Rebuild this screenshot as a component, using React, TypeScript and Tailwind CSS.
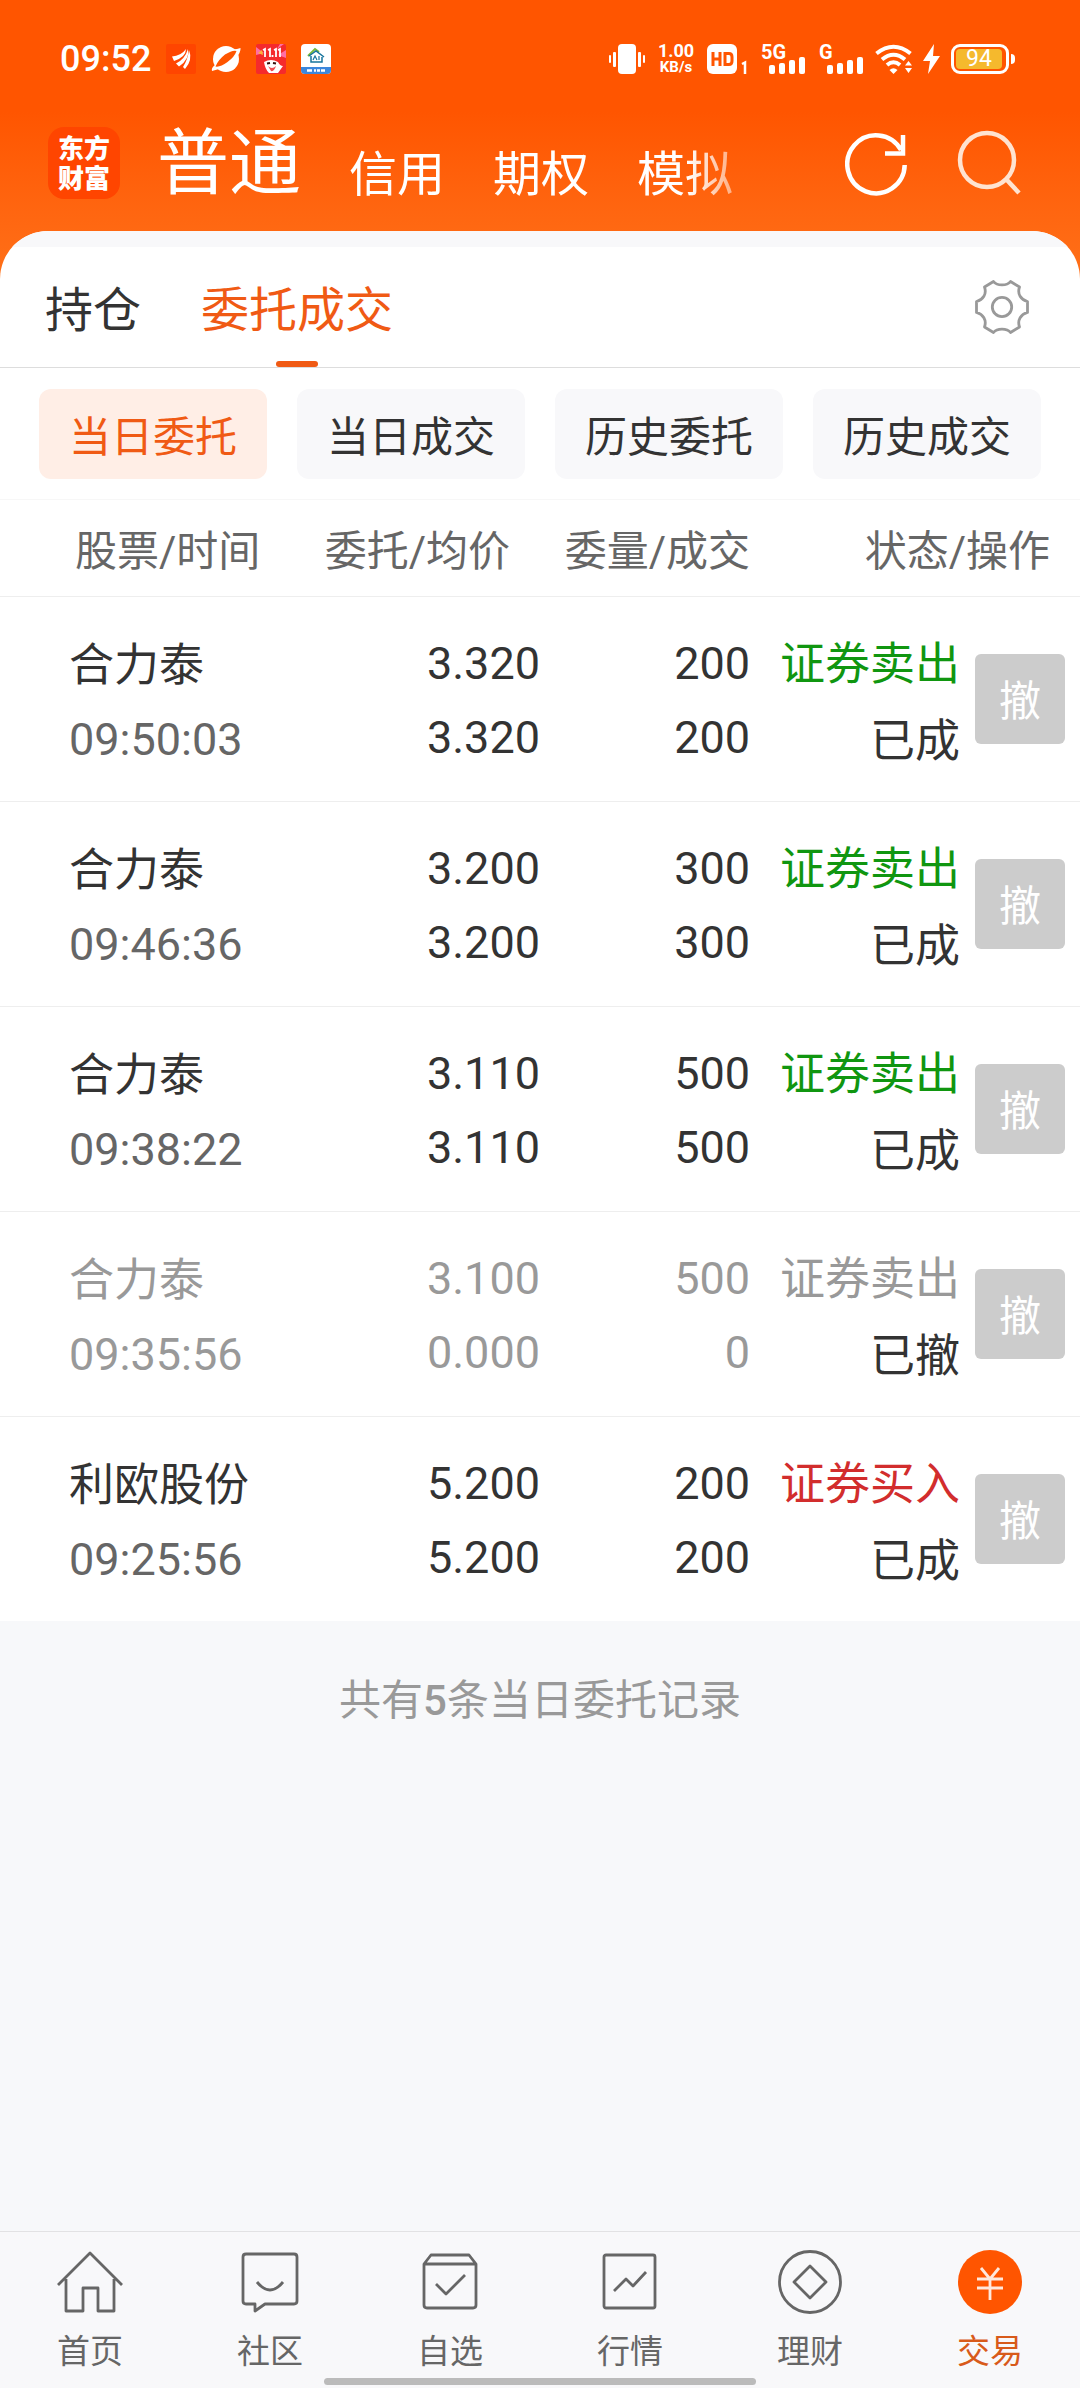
import type { ReactNode } from "react";

type Order = {
  name: string;
  time: string;
  price: string;
  avg: string;
  qty: string;
  filled: string;
  side: string;
  status: string;
  kind: "sell" | "buy" | "void";
};

const orders: Order[] = [
  { name: "合力泰", time: "09:50:03", price: "3.320", avg: "3.320", qty: "200", filled: "200", side: "证券卖出", status: "已成", kind: "sell" },
  { name: "合力泰", time: "09:46:36", price: "3.200", avg: "3.200", qty: "300", filled: "300", side: "证券卖出", status: "已成", kind: "sell" },
  { name: "合力泰", time: "09:38:22", price: "3.110", avg: "3.110", qty: "500", filled: "500", side: "证券卖出", status: "已成", kind: "sell" },
  { name: "合力泰", time: "09:35:56", price: "3.100", avg: "0.000", qty: "500", filled: "0", side: "证券卖出", status: "已撤", kind: "void" },
  { name: "利欧股份", time: "09:25:56", price: "5.200", avg: "5.200", qty: "200", filled: "200", side: "证券买入", status: "已成", kind: "buy" },
];

const sideColor = {
  sell: "text-[#109610]",
  buy: "text-[#d22d2d]",
  void: "text-[#999999]",
};

function StatusBar() {
  return (
    <div className="flex h-[118px] items-center justify-between pr-[65px] pl-[60px]">
      <div className="flex items-center gap-[15px]">
        <span className="text-[36px] leading-[42px] font-medium">09:52</span>
        <svg width="30" height="30" viewBox="0 0 30 30">
          <rect width="30" height="30" rx="2" fill="#ff4500" />
          <g fill="#fff">
            <path d="M6 12.500Q15 12 20 5Q20 13 8 17Z" />
            <path d="M10 19.500Q19 15 22 5Q24 15 13 22.500Z" />
            <path d="M17 23Q22 15 23 6Q27 16 19 25Z" />
          </g>
        </svg>
        <svg width="30" height="30" viewBox="0 0 30 30">
          <circle cx="15" cy="15" r="13" fill="#fff" />
          <path d="M4 21Q8 14 14 9.500Q20 5 26 5L29.500 4Q30 8 25 14Q19 22 8 25L1 27Q0 24 4 21Z" fill="#fff" />
          <path d="M4.500 22.500Q7 16 14 10.500Q22 5.500 25.500 7Q23.500 13 16.500 18Q9 23.500 4.500 22.500Z" fill="#ff5500" />
        </svg>
        <svg width="30" height="30" viewBox="0 0 30 30">
          <rect width="30" height="30" rx="2" fill="#f52a2c" />
          <path d="M0 3L8 9L0 11ZM30 6L22 11L30 14ZM24 0L21 5L28 0Z" fill="#ff6fa4" />
          <path d="M2 9L6 6L7 11Z" fill="#ffb13b" />
          <path d="M7 6L9 5V13M12 6L14 5V13M16.500 11V13M18 6L20 5V13M22 6L24 5V13" stroke="#fff" strokeWidth="1.800" fill="none" />
          <path d="M8 18Q15 14 22 18Q24 22 27 22L22 29H13Q9 25 8 18Z" fill="#fff" />
          <path d="M11 19.500L14 19M17 19L20 19.500" stroke="#35110f" strokeWidth="2" />
          <path d="M12 22Q16 26 20 22Q18 28 15 27Z" fill="#f04a50" />
        </svg>
        <svg width="30" height="30" viewBox="0 0 30 30">
          <path d="M4 0H26Q30 0 30 4V26Q30 30 26 30H4Q0 30 0 26V4Q0 0 4 0Z" fill="#fff" />
          <path d="M0 23H30V26Q30 30 26 30H4Q0 30 0 26Z" fill="#3c87dc" />
          <path d="M7 12L14 5L18 8" fill="none" stroke="#7bb83c" strokeWidth="2" />
          <path d="M8 12L15 7L23 13M10 12V18H21V13" fill="none" stroke="#17749c" strokeWidth="1.500" />
          <path d="M12 16L14 12L16 16M18 12V16" fill="none" stroke="#17749c" strokeWidth="1.200" />
          <path d="M6 26.500H11M13 26.500H15M16 26.500H19M20 26.500H24" stroke="#fff" strokeWidth="2.500" />
        </svg>
      </div>

      <div className="flex items-center">
        <svg width="36" height="30" viewBox="0 0 36 30" fill="#fff">
          <rect x="9" width="18" height="30" rx="4" />
          <rect x="0" y="11" width="2" height="8" rx="1" />
          <rect x="4" y="8" width="3" height="15" rx="1" />
          <rect x="29" y="8" width="3" height="15" rx="1" />
          <rect x="34" y="11" width="2" height="8" rx="1" />
        </svg>
        <div className="ml-3 flex w-[38px] flex-col items-center font-bold">
          <span className="text-[18px] leading-4">1.00</span>
          <span className="text-[15px] leading-4">KB/s</span>
        </div>
        <svg className="ml-3" width="40" height="30" viewBox="0 0 40 30">
          <rect width="30" height="30" rx="6" fill="#fff" />
          <path d="M6 8V22M13 8V22M6 15H13M18 9.500H22Q25 9.500 25 13V17Q25 20.500 22 20.500H18Z" fill="none" stroke="#ff5500" strokeWidth="3" />
          <path d="M35 20L38 18.500V30" fill="none" stroke="#fff" strokeWidth="2.500" />
        </svg>
        <Signal label="5G" />
        <Signal label="G" />
        <svg className="ml-3" width="38" height="30" viewBox="0 0 38 30">
          <g fill="none" stroke="#fff" strokeWidth="4">
            <path d="M1.500 9.500Q18.500-4 35.500 9.500" />
            <path d="M7 15.500Q18.500 6 30 15.500" />
            <path d="M12 21Q18.500 15.500 25 21" />
          </g>
          <path d="M14.500 26Q18.500 22.500 22.500 26L18.500 30Z" fill="#fff" />
          <path d="M30 21.500L33.500 17L37 21.500ZM30 24L33.500 29L37 24Z" fill="#fff" />
        </svg>
        <svg className="ml-[10px]" width="18" height="30" viewBox="0 0 18 30">
          <path d="M11 0L0 17H7L5 30L17 12H10Z" fill="#fff" />
        </svg>
        <div className="ml-[10px] flex items-center gap-[2px]">
          <div className="flex h-[30px] w-[58px] rounded-[9px] border-[3px] border-white p-[2px]">
            <div className="flex w-[46px] items-center justify-center rounded-[4px] bg-[#f5b92d] text-[23px] leading-5">94</div>
          </div>
          <div className="h-[10px] w-1 rounded-r-full bg-white" />
        </div>
      </div>
    </div>
  );
}

function Signal({ label }: { label: string }) {
  return (
    <div className="relative ml-[14px] h-[30px] w-[44px]">
      <span className="absolute top-0 left-0 text-[20px] leading-4 font-bold">{label}</span>
      <svg className="absolute right-0 bottom-0" width="36" height="17" viewBox="0 0 36 17" fill="#fff">
        <rect x="0" y="8" width="6" height="9" rx="2" />
        <rect x="10" y="6" width="6" height="11" rx="2" />
        <rect x="20" y="3" width="6" height="14" rx="2" />
        <rect x="30" y="0" width="6" height="17" rx="2" />
      </svg>
    </div>
  );
}

function TopNav() {
  return (
    <div className="flex h-[113px] items-start pr-[57px] pl-12">
      <div className="mt-[9px] flex size-[72px] shrink-0 flex-col items-center justify-center rounded-2xl bg-[#ff4500] pt-[2px] text-[26px] leading-[30px] font-black">
        <span>东方</span>
        <span>财富</span>
      </div>
      <nav className="mt-[2px] ml-[37px] flex flex-1 items-end gap-12 text-[48px] leading-[66px] whitespace-nowrap [mask-image:linear-gradient(to_right,#000_530px,transparent_620px)]">
        <a href="#normal" className="text-[72px] leading-[88px]">普通</a>
        <a href="#credit">信用</a>
        <a href="#options">期权</a>
        <a href="#demo">模拟</a>
      </nav>
      <div className="mt-3 flex shrink-0 gap-[46px]">
        <button type="button" aria-label="刷新">
          <svg width="66" height="68" viewBox="0 0 66 68" fill="none" stroke="#fff" strokeWidth="4.500">
            <path d="M59.700 35A28.700 29 0 1 1 56 20M58 5V23.500H40" />
          </svg>
        </button>
        <button type="button" aria-label="搜索">
          <svg width="66" height="68" viewBox="0 0 66 68" fill="none" stroke="#ffe3d0" strokeWidth="4.500">
            <circle cx="30" cy="30" r="27" />
            <path d="M49 49L62 63" />
          </svg>
        </button>
      </div>
    </div>
  );
}

function Gear() {
  return (
    <svg width="54" height="54" viewBox="0 0 54 54" fill="none" stroke="#999" strokeWidth="2.800" strokeLinejoin="round">
      <circle cx="27" cy="27" r="9.700" />
      <path d="M18.500 1.500C22 6 32 6 35.500 1.500L44.500 7C42 14 46 20 52.500 21.500V32.500C46 34 42 40 44.500 47L35.500 52.500C32 48 22 48 18.500 52.500L9.500 47C12 40 8 34 1.500 32.500V21.500C8 20 12 14 9.500 7Z" />
    </svg>
  );
}

function Tabs() {
  return (
    <div className="flex h-[121px] items-stretch justify-between border-b border-[#dddddd] pr-[51px] pl-[45px] text-[48px]">
      <div className="flex gap-[60px]">
        <button type="button" className="pt-2 text-[#333333]">持仓</button>
        <button type="button" className="relative pt-2 text-[#f05a14]">
          委托成交
          <span className="absolute bottom-0 left-1/2 h-[6px] w-[42px] -translate-x-1/2 rounded-full bg-[#f05a14]" />
        </button>
      </div>
      <button type="button" aria-label="设置">
        <Gear />
      </button>
    </div>
  );
}

function Filters() {
  const items = ["当日委托", "当日成交", "历史委托", "历史成交"];
  return (
    <div className="grid grid-cols-4 gap-[30px] border-b border-[#f7f7f7] px-[39px] pt-[21px] pb-5">
      {items.map((item, i) => (
        <button
          key={item}
          type="button"
          className={
            i === 0
              ? "h-[90px] rounded-xl bg-[#ffeee6] pt-[6px] text-[42px] text-[#f05a14]"
              : "h-[90px] rounded-xl bg-[#f8f8fa] pt-[6px] text-[42px] text-[#333333]"
          }
        >
          {item}
        </button>
      ))}
    </div>
  );
}

function OrdersTable() {
  return (
    <table className="w-full table-fixed border-collapse bg-white text-right text-[45px] leading-[74px] text-[#333333]">
      <colgroup>
        <col />
        <col className="w-[240px]" />
        <col className="w-[210px]" />
        <col className="w-[210px]" />
        <col className="w-[120px]" />
      </colgroup>
      <thead>
        <tr className="h-24 border-b border-[#eeeeee] text-[42px] leading-[60px] text-[#666666]">
          <th scope="col" className="pt-2 pl-[75px] text-left font-normal">股票/时间</th>
          <th scope="col" className="pt-2 pr-[30px] font-normal">委托/均价</th>
          <th scope="col" className="pt-2 font-normal">委量/成交</th>
          <th scope="col" colSpan={2} className="pt-2 pr-[30px] font-normal">状态/操作</th>
        </tr>
      </thead>
      <tbody>
        {orders.map((o) => (
          <tr
            key={o.time}
            className={
              o.kind === "void"
                ? "h-[205px] border-b border-[#eeeeee] text-[#999999] last:border-b-0"
                : "h-[205px] border-b border-[#eeeeee] last:border-b-0"
            }
          >
            <td className="pt-2 pl-[69px] text-left">
              <div>{o.name}</div>
              <div className={o.kind === "void" ? "text-[#999999]" : "text-[#666666]"}>{o.time}</div>
            </td>
            <td className="pt-1">
              <div>{o.price}</div>
              <div>{o.avg}</div>
            </td>
            <td className="pt-1">
              <div>{o.qty}</div>
              <div>{o.filled}</div>
            </td>
            <td className="pt-2 leading-[77px]">
              <div className={sideColor[o.kind]}>{o.side}</div>
              <div className="text-[#333333]">{o.status}</div>
            </td>
            <td className="pr-[15px]">
              <button type="button" className="ml-auto flex size-[90px] items-center justify-center rounded-md bg-[#cccccc] pt-[6px] text-[42px] text-white">
                撤
              </button>
            </td>
          </tr>
        ))}
      </tbody>
    </table>
  );
}

const navItems: { label: string; icon: ReactNode }[] = [
  {
    label: "首页",
    icon: <path d="M2 37L34 5L66 37M10 31V63H27V40H42V63H58V31" />,
  },
  {
    label: "社区",
    icon: (
      <>
        <path d="M10 6H58Q61 6 61 9V53Q61 56 58 56H29L19 63V56H10Q7 56 7 53V9Q7 6 10 6Z" />
        <path d="M21 34Q34 50 47 34" />
      </>
    ),
  },
  {
    label: "自选",
    icon: (
      <>
        <path d="M8 16L15 7H53L60 16V57Q60 60 57 60H11Q8 60 8 57ZM8 16H60" />
        <path d="M20 36L30 46L49 27" />
      </>
    ),
  },
  {
    label: "行情",
    icon: (
      <>
        <rect x="8" y="7" width="51" height="53" rx="2" />
        <path d="M18 43L30 31L37 38L50 24" />
      </>
    ),
  },
  {
    label: "理财",
    icon: (
      <>
        <circle cx="34" cy="34" r="30.500" />
        <path d="M34 18L50 34L34 50L18 34Z" />
      </>
    ),
  },
  {
    label: "交易",
    icon: (
      <>
        <circle cx="34" cy="34" r="32" fill="#ff5500" stroke="none" />
        <path d="M25 20L34 31L43 20M21 31H47M21 40H47M34 31V52" stroke="#ffe8dc" />
      </>
    ),
  },
];

function BottomNav() {
  return (
    <nav className="relative grid h-[157px] grid-cols-6 border-t border-[#e2e2e4] bg-[#f8f8fa] pt-4">
      {navItems.map((item, i) => (
        <a
          key={item.label}
          href="#tab"
          className={
            i === 5
              ? "flex flex-col items-center gap-3 text-[33px] leading-[48px] text-[#d85a1a]"
              : "flex flex-col items-center gap-3 text-[33px] leading-[48px] text-[#666666]"
          }
        >
          <svg width="68" height="68" viewBox="0 0 68 68" fill="none" stroke="#666" strokeWidth="2.800" strokeLinejoin="round">
            {item.icon}
          </svg>
          {item.label}
        </a>
      ))}
      <div className="absolute bottom-[3px] left-1/2 h-[7px] w-2/5 -translate-x-1/2 rounded-full bg-[#bbbbbb]" />
    </nav>
  );
}

export default function App() {
  return (
    <div className="flex min-h-screen flex-col bg-[#f7f8fa] font-[Roboto,'Noto_Sans_CJK_SC',sans-serif]">
      <header className="bg-linear-to-b from-[#ff5500] from-40% to-[#ff7018] pb-12 text-white">
        <StatusBar />
        <TopNav />
      </header>
      <main className="-mt-12 flex-1">
        <div className="overflow-hidden rounded-t-[48px] bg-white">
          <div className="h-4 bg-[#f8f8fa]" />
          <Tabs />
          <Filters />
          <OrdersTable />
        </div>
        <p className="pt-[50px] text-center text-[42px] leading-[60px] text-[#999999]">
          共有<span className="font-medium">5</span>条当日委托记录
        </p>
      </main>
      <BottomNav />
    </div>
  );
}
